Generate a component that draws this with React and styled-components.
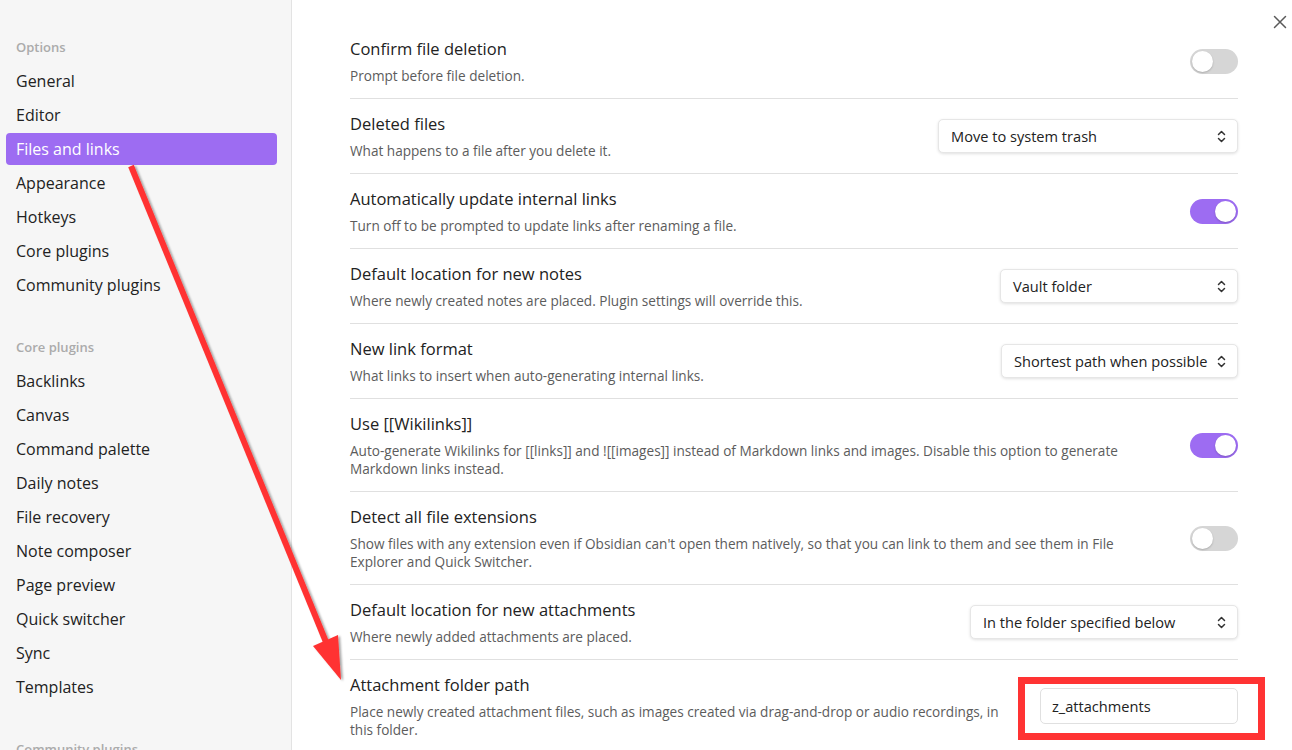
import React from "react";
import styled, { createGlobalStyle } from "styled-components";

const GlobalStyle = createGlobalStyle`
  html, body {
    margin: 0;
    padding: 0;
    background: #ffffff;
    font-family: "Open Sans", "Noto Sans", sans-serif;
    color: #222222;
  }
  * { box-sizing: border-box; }
`;

const Page = styled.div`
  position: relative;
  display: flex;
  width: 1292px;
  height: 750px;
  overflow: hidden;
`;

const Sidebar = styled.nav`
  width: 292px;
  flex-shrink: 0;
  background: #f6f6f6;
  border-right: 1px solid #e3e3e3;
  padding: 31px 14px 0 6px;
  display: flex;
  flex-direction: column;
  gap: 30px;
`;

const Group = styled.div`
  display: flex;
  flex-direction: column;
  gap: 2px;
`;

const GroupTitle = styled.div`
  height: 32px;
  line-height: 32px;
  padding-left: 10px;
  font-size: 13px;
  font-weight: 600;
  color: #ababab;
`;

const NavItem = styled.div`
  height: 32px;
  line-height: 32px;
  padding-left: 10px;
  border-radius: 4px;
  font-size: 16px;
  color: ${(p) => (p.$active ? "#ffffff" : "#222222")};
  background: ${(p) => (p.$active ? "#9d6cf2" : "transparent")};
`;

const Content = styled.main`
  flex: 1;
  padding: 23px 54px 0 58px;
  overflow: hidden;
`;

const Item = styled.div`
  display: flex;
  align-items: center;
  gap: 24px;
  padding: ${(p) => (p.$first ? "14px" : "13px")} 0 13px;
  border-top: ${(p) => (p.$first ? "none" : "1px solid #e0e0e0")};
`;

const Info = styled.div`
  flex: 1;
  min-width: 0;
`;

const Title = styled.div`
  font-size: 16.5px;
  line-height: 24px;
  color: #222222;
`;

const Desc = styled.div`
  margin-top: 6px;
  font-size: 13.6px;
  line-height: 18px;
  color: #5c5c5c;
`;

const Toggle = styled.div`
  position: relative;
  width: 48px;
  height: 25px;
  flex-shrink: 0;
  border-radius: 13px;
  background: ${(p) => (p.$on ? "#9d6cf2" : "#d6d6d6")};
  &::after {
    content: "";
    position: absolute;
    top: 2px;
    left: ${(p) => (p.$on ? "25px" : "2px")};
    width: 21px;
    height: 21px;
    border-radius: 50%;
    background: #ffffff;
    box-shadow: 0 1px 2px rgba(0, 0, 0, 0.2);
  }
`;

const Select = styled.div`
  display: flex;
  align-items: center;
  justify-content: space-between;
  flex-shrink: 0;
  width: ${(p) => p.$width}px;
  height: 34px;
  padding: 0 11px 0 12px;
  border-radius: 5px;
  background: #ffffff;
  border: 1px solid #e6e6e6;
  box-shadow: 0 1px 3px rgba(0, 0, 0, 0.12);
  font-size: 14.6px;
  color: #222222;
  white-space: nowrap;
`;

const TextInput = styled.div`
  flex-shrink: 0;
  width: 198px;
  height: 36px;
  line-height: 34px;
  padding: 0 11px;
  border: 1px solid #e0e0e0;
  border-radius: 5px;
  font-size: 14.6px;
  color: #222222;
`;

const CloseButton = styled.div`
  position: absolute;
  top: 13px;
  right: 4px;
  width: 16px;
  height: 16px;
`;

const Overlay = styled.svg`
  position: absolute;
  top: 0;
  left: 0;
  pointer-events: none;
`;

const Chevrons = () => (
  <svg width="9" height="13" viewBox="0 0 9 13" fill="none" stroke="#333" strokeWidth="1.5" strokeLinecap="round" strokeLinejoin="round">
    <path d="M1.5 4.5L4.5 1.5L7.5 4.5" />
    <path d="M1.5 8.5L4.5 11.5L7.5 8.5" />
  </svg>
);

const optionItems = ["General", "Editor", "Files and links", "Appearance", "Hotkeys", "Core plugins", "Community plugins"];
const coreItems = ["Backlinks", "Canvas", "Command palette", "Daily notes", "File recovery", "Note composer", "Page preview", "Quick switcher", "Sync", "Templates"];

const settings = [
  { title: "Confirm file deletion", desc: "Prompt before file deletion.", toggle: false },
  { title: "Deleted files", desc: "What happens to a file after you delete it.", select: "Move to system trash", width: 300 },
  { title: "Automatically update internal links", desc: "Turn off to be prompted to update links after renaming a file.", toggle: true },
  { title: "Default location for new notes", desc: "Where newly created notes are placed. Plugin settings will override this.", select: "Vault folder", width: 238 },
  { title: "New link format", desc: "What links to insert when auto-generating internal links.", select: "Shortest path when possible", width: 237 },
  { title: "Use [[Wikilinks]]", desc: "Auto-generate Wikilinks for [[links]] and ![[images]] instead of Markdown links and images. Disable this option to generate Markdown links instead.", toggle: true },
  { title: "Detect all file extensions", desc: "Show files with any extension even if Obsidian can't open them natively, so that you can link to them and see them in File Explorer and Quick Switcher.", toggle: false },
  { title: "Default location for new attachments", desc: "Where newly added attachments are placed.", select: "In the folder specified below", width: 268 },
  { title: "Attachment folder path", desc: "Place newly created attachment files, such as images created via drag-and-drop or audio recordings, in this folder.", input: "z_attachments" },
];

const Control = ({ s }) => {
  if (s.select) {
    return (
      <Select $width={s.width}>
        <span>{s.select}</span>
        <Chevrons />
      </Select>
    );
  }
  if (s.input) return <TextInput>{s.input}</TextInput>;
  return <Toggle $on={s.toggle} />;
};

const App = () => (
  <Page>
    <GlobalStyle />
    <Sidebar>
      <Group>
        <GroupTitle>Options</GroupTitle>
        {optionItems.map((n) => (
          <NavItem key={n} $active={n === "Files and links"}>{n}</NavItem>
        ))}
      </Group>
      <Group>
        <GroupTitle>Core plugins</GroupTitle>
        {coreItems.map((n) => (
          <NavItem key={n}>{n}</NavItem>
        ))}
      </Group>
      <Group>
        <GroupTitle>Community plugins</GroupTitle>
      </Group>
    </Sidebar>
    <Content>
      {settings.map((s, i) => (
        <Item key={s.title} $first={i === 0}>
          <Info>
            <Title>{s.title}</Title>
            <Desc>{s.desc}</Desc>
          </Info>
          <Control s={s} />
        </Item>
      ))}
    </Content>
    <CloseButton>
      <svg width="16" height="16" viewBox="0 0 16 16" stroke="#5a5a5a" strokeWidth="1.5" strokeLinecap="round">
        <path d="M2.5 2.5L13.5 13.5M13.5 2.5L2.5 13.5" />
      </svg>
    </CloseButton>
    <Overlay width="1292" height="750">
      <defs>
        <filter id="sh" x="-20%" y="-20%" width="140%" height="140%">
          <feDropShadow dx="2" dy="1" stdDeviation="1.2" floodColor="#000" floodOpacity="0.35" />
        </filter>
      </defs>
      <g filter="url(#sh)" fill="#ff3333" stroke="#ff3333">
        <line x1="131" y1="166" x2="326" y2="642" strokeWidth="6" />
        <polygon points="313,646 338,635 341,680" stroke="none" />
      </g>
      <rect x="1021.5" y="680.5" width="240" height="56" fill="none" stroke="#ff3333" strokeWidth="7" />
    </Overlay>
  </Page>
);

export default App;
